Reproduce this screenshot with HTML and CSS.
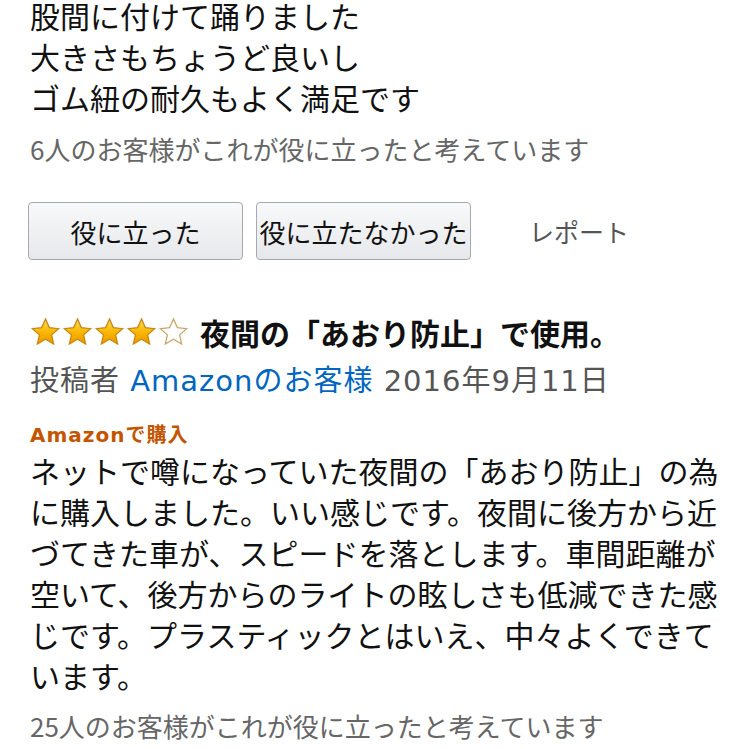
FILE: index.html
```html
<!DOCTYPE html>
<html lang="ja">
<head>
<meta charset="utf-8">
<title>レビュー</title>
<link rel="stylesheet" href="styles.css">
</head>
<body>
<div class="page">
  <p class="text top">股間に付けて踊りました<br>大きさもちょうど良いし<br>ゴム紐の耐久もよく満足です</p>
  <p class="helpful first">6人のお客様がこれが役に立ったと考えています</p>
  <div class="actions">
    <button class="btn">役に立った</button>
    <button class="btn">役に立たなかった</button>
    <span class="report">レポート</span>
  </div>
  <div class="review-head">
    <span class="stars" aria-label="5つ星のうち4">
      <svg class="star" viewBox="0 0 24 24"><defs><linearGradient id="gold" x1="0" y1="0" x2="0" y2="1"><stop offset="0" stop-color="#fddc5c"/><stop offset="0.55" stop-color="#f7b500"/><stop offset="1" stop-color="#e89a00"/></linearGradient></defs><path d="M12 1.6l3.1 6.9 7.4.8-5.6 5 1.6 7.3L12 17.8l-6.5 3.8 1.6-7.3-5.6-5 7.4-.8z" fill="url(#gold)" stroke="#c7860e" stroke-width="1"/></svg>
      <svg class="star" viewBox="0 0 24 24"><path d="M12 1.6l3.1 6.9 7.4.8-5.6 5 1.6 7.3L12 17.8l-6.5 3.8 1.6-7.3-5.6-5 7.4-.8z" fill="url(#gold)" stroke="#c7860e" stroke-width="1"/></svg>
      <svg class="star" viewBox="0 0 24 24"><path d="M12 1.6l3.1 6.9 7.4.8-5.6 5 1.6 7.3L12 17.8l-6.5 3.8 1.6-7.3-5.6-5 7.4-.8z" fill="url(#gold)" stroke="#c7860e" stroke-width="1"/></svg>
      <svg class="star" viewBox="0 0 24 24"><path d="M12 1.6l3.1 6.9 7.4.8-5.6 5 1.6 7.3L12 17.8l-6.5 3.8 1.6-7.3-5.6-5 7.4-.8z" fill="url(#gold)" stroke="#c7860e" stroke-width="1"/></svg>
      <svg class="star" viewBox="0 0 24 24"><path d="M12 1.6l3.1 6.9 7.4.8-5.6 5 1.6 7.3L12 17.8l-6.5 3.8 1.6-7.3-5.6-5 7.4-.8z" fill="#fff" stroke="#c9a46a" stroke-width="1"/></svg>
    </span>
    <h3 class="title">夜間の「あおり防止」で使用。</h3>
  </div>
  <p class="byline">投稿者 <a class="author" href="#">Amazonのお客様</a> 2016年9月11日</p>
  <p class="verified">Amazonで購入</p>
  <p class="text body">ネットで噂になっていた夜間の「あおり防止」の為に購入しました。いい感じです。夜間に後方から近づてきた車が、スピードを落とします。車間距離が空いて、後方からのライトの眩しさも低減できた感じです。プラスティックとはいえ、中々よくできています。</p>
  <p class="helpful last">25人のお客様がこれが役に立ったと考えています</p>
</div>
</body>
</html>
```

FILE: styles.css
```css
html, body {
  margin: 0;
  padding: 0;
  background: #fff;
}

body {
  font-family: "Noto Sans CJK JP", "Noto Sans", sans-serif;
  color: #111;
  overflow: hidden;
}

.page {
  padding: 0 0 0 30px;
}

p {
  margin: 0;
}

.text {
  font-size: 30px;
  line-height: 41px;
  color: #111;
}

.top {
  margin-top: -5px;
}

.body {
  max-width: 700px;
  margin-top: 2px;
}

.helpful {
  font-size: 26px;
  line-height: 36px;
  color: #666;
}

.helpful.first {
  margin-top: 13px;
}

.helpful.last {
  margin-top: 12px;
}

.actions {
  display: flex;
  align-items: center;
  gap: 13px;
  margin: 35px 0 0 -2px;
}

.btn {
  width: 215px;
  height: 58px;
  padding: 0;
  border: 1px solid #a5a9af;
  border-radius: 4px;
  background: linear-gradient(#f8f9fa, #e6e8eb);
  font-family: inherit;
  font-size: 26px;
  color: #111;
  white-space: nowrap;
  display: flex;
  align-items: center;
  justify-content: center;
}

.report {
  margin-left: 45px;
  font-size: 25px;
  color: #555;
}

.review-head {
  display: flex;
  align-items: center;
  gap: 11px;
  height: 40px;
  margin-top: 52px;
}

.stars {
  display: flex;
  gap: 1px;
}

.star {
  width: 31px;
  height: 30px;
  display: block;
}

.title {
  margin: 0;
  font-size: 30px;
  font-weight: 700;
  line-height: 40px;
  color: #111;
}

.byline {
  margin-top: 11px;
  font-family: "DejaVu Sans", "Noto Sans CJK JP", sans-serif;
  font-size: 29px;
  line-height: 36px;
  letter-spacing: 1px;
  color: #555;
}

.author {
  color: #0066c0;
  text-decoration: none;
}

.verified {
  margin-top: 23px;
  font-family: "DejaVu Sans", "Noto Sans CJK JP", sans-serif;
  font-size: 20px;
  line-height: 26px;
  letter-spacing: 1px;
  font-weight: 700;
  color: #c45500;
}
```
